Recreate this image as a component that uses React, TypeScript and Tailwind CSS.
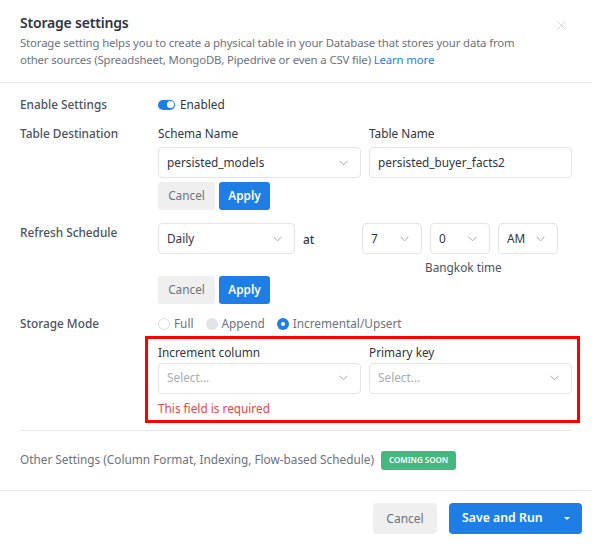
import React from "react";

const Chevron = () => (
    <svg width="9" height="6" viewBox="0 0 9 6" fill="none" className="shrink-0">
        <path d="M0.5 0.8l4 4 4-4" stroke="#a3a8b0" strokeWidth="1" />
    </svg>
);

const Select = ({ value, placeholder, className = "" }: { value?: string; placeholder?: string; className?: string }) => (
    <div className={`h-[31px] flex items-center justify-between pl-2 pr-[12px] border border-[#e2e4e8] rounded-[4px] bg-white ${className}`}>
        <span className={value ? "text-[#2f3542]" : "text-[#a8adb5]"}>{value ?? placeholder}</span>
        <Chevron />
    </div>
);

const ActionButtons = ({ className = "mt-[4px]" }: { className?: string }) => (
    <div className={`flex gap-1 ${className}`}>
        <button className="h-[28px] w-[57px] rounded-[3px] bg-[#efefef] text-[#6b7280]">Cancel</button>
        <button className="h-[28px] w-[51px] rounded-[3px] bg-[#1e7ee6] text-white font-semibold">Apply</button>
    </div>
);

const Label = ({ children }: { children: React.ReactNode }) => (
    <div className="text-[#4b5260] font-medium">{children}</div>
);

const App = () => {
    return (
        <div className="w-[592px] h-[545px] bg-white font-['Noto_Sans',sans-serif] text-[11.8px] text-[#2f3542] flex flex-col">
            <header className="relative px-5 pt-[12px] pb-[14px] border-b border-[#e8e8ea]">
                <h2 className="text-[14px] font-semibold tracking-[-0.2px] text-[#2f3542] leading-[22px]">Storage settings</h2>
                <p className="text-[11.4px] tracking-[-0.15px] text-[#6b7280] leading-[17px]">
                    Storage setting helps you to create a physical table in your Database that stores your data from
                    <br />
                    other sources (Spreadsheet, MongoDB, Pipedrive or even a CSV file) <span className="text-[#1e7ee6]">Learn more</span>
                </p>
                <svg width="9" height="9" viewBox="0 0 9 9" className="absolute right-[26px] top-[21px]">
                    <path d="M0.5 0.5l8 8M8.5 0.5l-8 8" stroke="#d1d5db" strokeWidth="1" />
                </svg>
            </header>

            <main className="px-5 pt-[13px] flex-1">
                <div className="grid grid-cols-[138px_1fr] items-center h-[17px]">
                    <Label>Enable Settings</Label>
                    <div className="flex items-center gap-[5px]">
                        <span className="w-[17px] h-[10px] rounded-full bg-[#1e7ee6] flex justify-end items-center pr-[1.5px]">
                            <span className="w-[7px] h-[7px] rounded-full bg-white" />
                        </span>
                        <span>Enabled</span>
                    </div>
                </div>

                <div className="grid grid-cols-[138px_1fr] mt-[12px]">
                    <Label>Table Destination</Label>
                    <div>
                        <div className="grid grid-cols-2 gap-2">
                            <div>
                                <div className="leading-[17px]">Schema Name</div>
                                <Select value="persisted_models" className="mt-[5px]" />
                            </div>
                            <div>
                                <div className="leading-[17px]">Table Name</div>
                                <div className="mt-[5px] h-[31px] flex items-center px-2 border border-[#e2e4e8] rounded-[4px]">persisted_buyer_facts2</div>
                            </div>
                        </div>
                        <ActionButtons />
                    </div>
                </div>

                <div className="grid grid-cols-[138px_1fr] mt-[13px]">
                    <div className="pt-[1px]"><Label>Refresh Schedule</Label></div>
                    <div>
                        <div className="flex items-start">
                            <Select value="Daily" className="w-[137px]" />
                            <span className="w-[67px] pl-[8px] pt-[8px] font-medium">at</span>
                            <div>
                                <div className="flex gap-[8px]">
                                    <Select value="7" className="w-[60px]" />
                                    <Select value="0" className="w-[60px]" />
                                    <Select value="AM" className="w-[60px]" />
                                </div>
                                <div className="text-[#4b5260] pl-[63px] mt-[5px] leading-[16px]">Bangkok time</div>
                            </div>
                        </div>
                        <ActionButtons className="mt-[1px]" />
                    </div>
                </div>

                <div className="grid grid-cols-[138px_1fr] mt-[11px]">
                    <Label>Storage Mode</Label>
                    <div className="flex items-center gap-[12px] text-[#6b7280]">
                        <span className="flex items-center gap-[4px]">
                            <span className="w-[12px] h-[12px] rounded-full border border-[#d9dce1] bg-white" />Full
                        </span>
                        <span className="flex items-center gap-[4px]">
                            <span className="w-[12px] h-[12px] rounded-full bg-[#e3e4e6]" />Append
                        </span>
                        <span className="flex items-center gap-[4px]">
                            <span className="w-[12px] h-[12px] rounded-full bg-[#1e7ee6] flex items-center justify-center">
                                <span className="w-[4px] h-[4px] rounded-full bg-white" />
                            </span>Incremental/Upsert
                        </span>
                    </div>
                </div>

                <div className="ml-[125px] mr-[-8px] mt-[3px] border-[3px] border-[#ff0000] pl-[10px] pr-[5px] pt-[5px] pb-[3px]">
                    <div className="grid grid-cols-2 gap-2">
                        <div>
                            <div className="leading-[17px]">Increment column</div>
                            <Select placeholder="Select..." className="mt-[2px]" />
                        </div>
                        <div>
                            <div className="leading-[17px]">Primary key</div>
                            <Select placeholder="Select..." className="mt-[2px]" />
                        </div>
                    </div>
                    <div className="text-[#ef4444] mt-[6px] leading-[17px]">This field is required</div>
                </div>

                <div className="border-t border-[#e8e8ea] mt-[7px] pt-[20px] flex items-center gap-[7px] text-[#6b7280]">
                    <span>Other Settings (Column Format, Indexing, Flow-based Schedule)</span>
                    <span className="h-[19px] px-[8px] rounded-[3px] bg-[#45b87f] text-white text-[8px] font-semibold flex items-center">COMING SOON</span>
                </div>
            </main>

            <footer className="border-t border-[#e8e8ea] h-[55px] flex items-start justify-end gap-3 pt-[12px] pr-[10px]">
                <button className="h-[31px] w-[64px] rounded-[4px] bg-[#efefef] text-[#6b7280] text-[12px]">Cancel</button>
                <button className="h-[31px] w-[133px] rounded-[4px] bg-[#1e7ee6] text-white text-[12.3px] font-semibold flex items-center pl-[13px] pr-[12px] justify-between">
                    <span>Save and Run</span>
                    <span className="w-0 h-0 border-l-[3px] border-r-[3px] border-t-[3px] border-l-transparent border-r-transparent border-t-white" />
                </button>
            </footer>
        </div>
    );
};

export default App;
